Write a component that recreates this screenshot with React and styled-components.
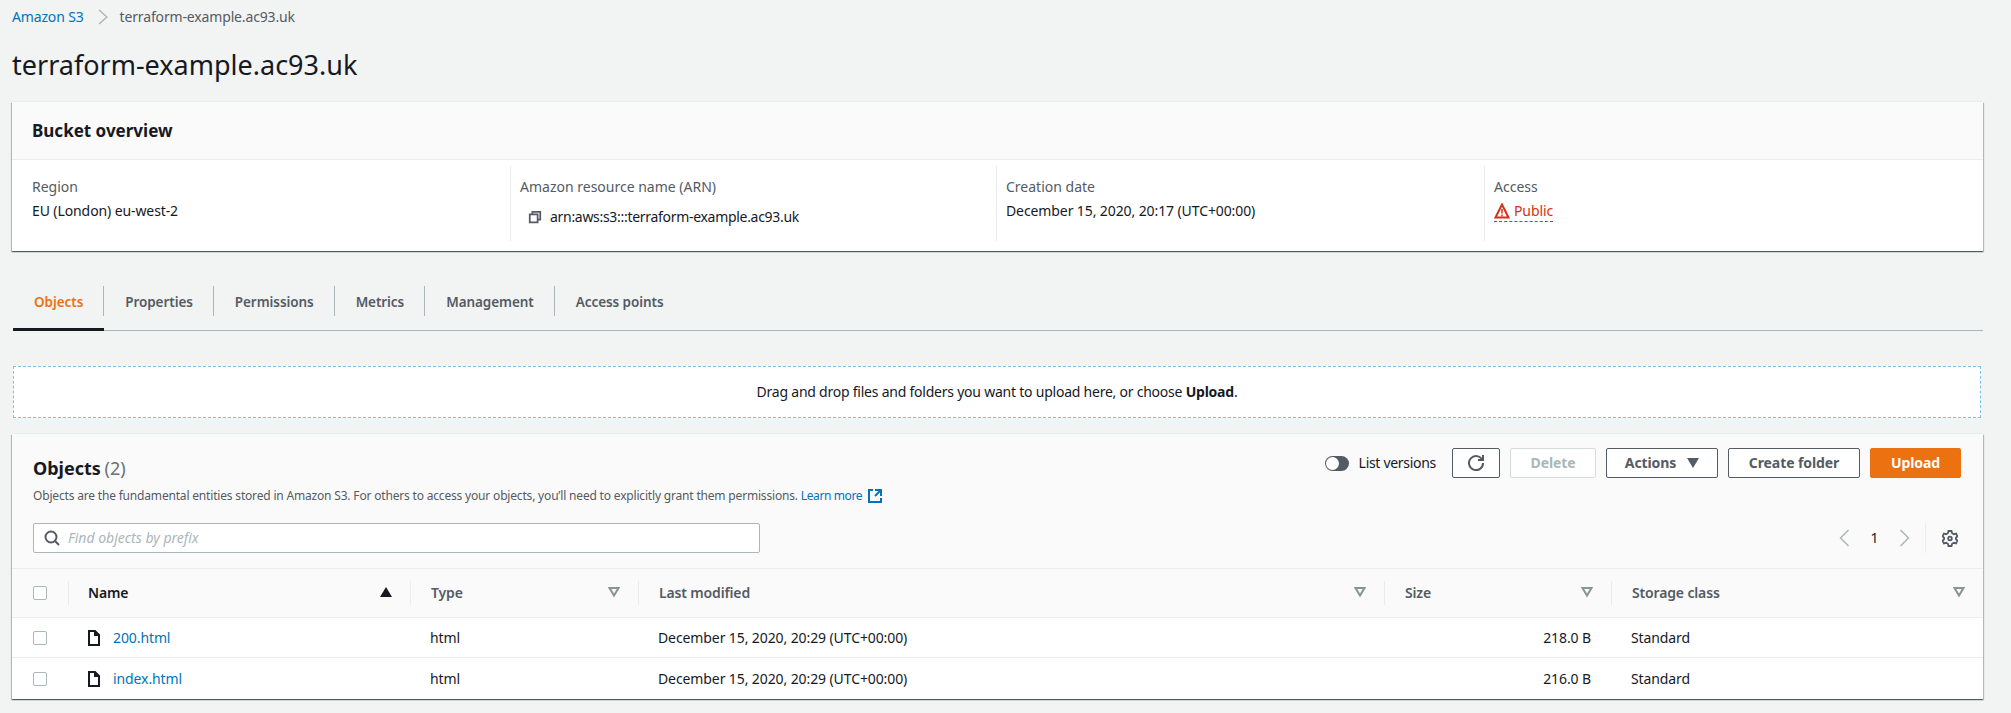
import React from 'react';
import styled, { createGlobalStyle } from 'styled-components';

const GlobalStyle = createGlobalStyle`
  html, body {
    margin: 0;
    padding: 0;
    background: #f2f3f3;
    color: #16191f;
    font-family: "Noto Sans", "Open Sans", sans-serif;
    font-size: 14px;
    line-height: 20px;
  }
`;

const Page = styled.div`
  width: 2011px;
  height: 713px;
  box-sizing: border-box;
  padding: 0 28px 0 12px;
  overflow: hidden;
`;

const Breadcrumbs = styled.nav`
  height: 34px;
  display: flex;
  align-items: center;
  font-size: 14px;
  letter-spacing: -0.15px;
  color: #545b64;
`;
const Link = styled.a`
  color: #0073bb;
`;
const CrumbSeparator = styled.svg`
  width: 10px;
  height: 16px;
  margin: 0 12px 0 14px;
  fill: none;
  stroke: #aab7b8;
  stroke-width: 1.5;
`;
const Title = styled.h1`
  margin: 0;
  height: 68px;
  box-sizing: border-box;
  padding-bottom: 6px;
  display: flex;
  align-items: center;
  font-size: 27px;
  font-weight: 400;
  line-height: 36px;
`;

const Panel = styled.section`
  margin-top: ${({ $gap }) => $gap || 0}px;
  background: #fff;
  box-shadow: 0 -1px 0 0 #eaeded, 0 1px 1px 0 rgba(0, 28, 36, 0.5), 1px 1px 1px 0 rgba(0, 28, 36, 0.2), -1px 1px 1px 0 rgba(0, 28, 36, 0.2);
`;
const PanelHeader = styled.header`
  height: 58px;
  box-sizing: border-box;
  display: flex;
  align-items: center;
  padding: 1px 20px 0;
  background: #fafafa;
  border-bottom: 1px solid #eaeded;
  font-size: 17px;
  font-weight: 700;
`;
const Overview = styled.div`
  height: 91px;
  box-sizing: border-box;
  padding: 6px 0 10px;
  display: grid;
  grid-template-columns: 498px 486px 488px 1fr;
`;
const OverviewCell = styled.div`
  padding: 11px 0 0 ${({ $first }) => ($first ? '20px' : '9px')};
  border-left: ${({ $first }) => ($first ? '0' : '1px solid #eaeded')};
`;
const Label = styled.div`
  color: #545b64;
  font-size: 14px;
  height: 20px;
`;
const Value = styled.div`
  display: flex;
  align-items: center;
  margin-top: 4px;
  font-size: 14px;
  letter-spacing: -0.1px;
`;
const ArnValue = styled(Value)`
  margin-top: 10px;
  padding-left: 8px;
  gap: 8px;
  letter-spacing: -0.3px;
`;
const PublicBadge = styled.span`
  display: inline-flex;
  align-items: center;
  gap: 4px;
  height: 20px;
  color: #d13212;
  border-bottom: 1px dashed #d13212;
`;

const TabList = styled.div`
  display: flex;
  margin: 35px 0 0 1px;
  height: 45px;
  box-sizing: border-box;
  border-bottom: 1px solid #aab7b8;
`;
const TabItem = styled.div`
  height: 45px;
  box-sizing: border-box;
  padding-left: 1px;
  border-bottom: 3px solid ${({ $active }) => ($active ? '#16191f' : 'transparent')};
`;
const TabLabel = styled.div`
  height: 30px;
  box-sizing: border-box;
  padding: 1px 20px 0;
  display: flex;
  align-items: center;
  font-size: 13.5px;
  font-weight: 600;
  letter-spacing: -0.07px;
  color: ${({ $active }) => ($active ? '#ec7211' : '#545b64')};
  border-right: ${({ $last }) => ($last ? '0' : '1px solid #aab7b8')};
`;

const DropZone = styled.div`
  margin: 35px 2px 0 1px;
  height: 52px;
  box-sizing: border-box;
  display: flex;
  align-items: center;
  justify-content: center;
  background: #fff;
  border: 1px dashed #7dc1e4;
  letter-spacing: -0.23px;
`;

const ObjectsHeader = styled.div`
  padding: 14px 22px 15px 21px;
  background: #fafafa;
  border-bottom: 1px solid #eaeded;
`;
const TopRow = styled.div`
  display: flex;
  justify-content: space-between;
  height: 61px;
  margin-bottom: 14px;
`;
const Heading = styled.div`
  padding-top: 8px;
`;
const HeadingTitle = styled.h2`
  margin: 0;
  font-size: 18px;
  line-height: 24px;
  font-weight: 700;
`;
const Count = styled.span`
  font-weight: 400;
  color: #687078;
  margin-left: -1px;
`;
const Description = styled.p`
  margin: 8px 0 0;
  display: flex;
  align-items: center;
  font-size: 12px;
  line-height: 16px;
  letter-spacing: -0.18px;
  color: #545b64;
`;
const LearnMore = styled(Link)`
  margin-left: 3px;
  letter-spacing: -0.4px;
`;
const Actions = styled.div`
  display: flex;
  align-items: flex-start;
  gap: 10px;
`;
const ToggleWrap = styled.div`
  display: flex;
  align-items: center;
  gap: 10px;
  height: 30px;
  margin-right: 6px;
  letter-spacing: -0.3px;
`;
const Toggle = styled.span`
  width: 24px;
  height: 15px;
  display: flex;
  align-items: center;
  padding: 0 10px 0 1px;
  box-sizing: border-box;
  border-radius: 8px;
  background: #545b64;
`;
const ToggleKnob = styled.span`
  width: 13px;
  height: 13px;
  flex: none;
  border-radius: 50%;
  background: #fff;
`;
const Button = styled.button`
  height: 30px;
  box-sizing: border-box;
  display: flex;
  align-items: center;
  justify-content: center;
  gap: 11px;
  padding: 0;
  width: ${({ $width }) => $width}px;
  font: 700 14px/20px "Noto Sans", sans-serif;
  letter-spacing: -0.1px;
  border-radius: 2px;
  border: 1px solid #545b64;
  background: #fff;
  color: #545b64;
`;
const DisabledButton = styled(Button)`
  border-color: #d5dbdb;
  color: #aab7b8;
`;
const PrimaryButton = styled(Button)`
  border-color: #ec7211;
  background: #ec7211;
  color: #fff;
`;
const SearchRow = styled.div`
  display: flex;
  justify-content: space-between;
  align-items: center;
  height: 30px;
`;
const SearchBox = styled.div`
  width: 727px;
  height: 30px;
  box-sizing: border-box;
  display: flex;
  align-items: center;
  gap: 8px;
  padding-left: 10px;
  background: #fff;
  border: 1px solid #aab7b8;
  border-radius: 2px;
`;
const Placeholder = styled.span`
  font-style: italic;
  font-size: 14px;
  color: #aab7b8;
`;
const Pager = styled.div`
  display: flex;
  align-items: center;
  height: 30px;
`;
const PageNumber = styled.span`
  width: 49px;
  text-align: center;
  font-size: 14px;
`;
const PagerDivider = styled.span`
  width: 1px;
  height: 30px;
  margin: 0 16px 0 15px;
  background: #eaeded;
`;

const columns = '56px 342px 228px 746px 227px 1fr';
const HeaderRow = styled.div`
  display: grid;
  grid-template-columns: ${columns};
  height: 49px;
  box-sizing: border-box;
  align-items: center;
  background: #fafafa;
  border-bottom: 1px solid #eaeded;
`;
const HeaderCell = styled.div`
  height: 24px;
  box-sizing: border-box;
  display: flex;
  align-items: center;
  justify-content: space-between;
  padding: 0 18px 0 ${({ $sorted }) => ($sorted ? '19px' : '20px')};
  border-left: 1px solid #eaeded;
  font-weight: 600;
  letter-spacing: -0.15px;
  color: ${({ $sorted }) => ($sorted ? '#16191f' : '#545b64')};
`;
const CheckCell = styled.div`
  padding-left: 21px;
  display: flex;
  align-items: center;
`;
const Checkbox = styled.span`
  width: 14px;
  height: 14px;
  box-sizing: border-box;
  display: block;
  background: #fff;
  border: 1px solid #aab7b8;
  border-radius: 2px;
`;
const Row = styled.div`
  display: grid;
  grid-template-columns: ${columns};
  height: ${({ $last }) => ($last ? '41px' : '40px')};
  box-sizing: border-box;
  align-items: center;
  border-bottom: ${({ $last }) => ($last ? '0' : '1px solid #eaeded')};
  letter-spacing: -0.1px;
`;
const Cell = styled.div`
  padding: 0 20px;
  display: flex;
  align-items: center;
  gap: 13px;
  justify-content: ${({ $right }) => ($right ? 'flex-end' : 'flex-start')};
`;

const Svg = styled.svg`
  flex: none;
  width: ${({ $w, $size }) => $w || $size || 16}px;
  height: ${({ $size }) => $size || 16}px;
  margin-top: ${({ $up }) => ($up ? -2 : 0)}px;
  margin-left: ${({ $ml }) => $ml || 0}px;
  margin-right: ${({ $mr }) => $mr || 0}px;
  fill: none;
  stroke: ${({ $color }) => $color || 'currentColor'};
  stroke-width: ${({ $stroke }) => $stroke || 2};
`;
const SolidSvg = styled(Svg)`
  stroke: none;
  fill: ${({ $color }) => $color || 'currentColor'};
`;

const CopyIcon = () => (
  <Svg viewBox="0 0 16 16" $size={14} $color="#545b64">
    <path d="M2 5h9v9H2z" />
    <path d="M5 5V2h9v9h-3" />
  </Svg>
);
const WarningIcon = () => (
  <Svg viewBox="0 0 16 16" $color="#d13212">
    <path d="M8 1.5 1.5 14.5h13z" />
    <path d="M8 6v4.5M8 11.5v2" strokeWidth="1.5" />
  </Svg>
);
const ExternalIcon = () => (
  <Svg viewBox="0 0 16 16" $color="#0073bb" $ml={5}>
    <path d="M6 2H2v12h12v-4" />
    <path d="M14 8V2H8" />
    <path d="M14 2 8 8" />
  </Svg>
);
const RefreshIcon = () => (
  <Svg viewBox="0 0 16 16">
    <path d="M10 5h5V0" />
    <path d="M15 8a7 7 0 1 1-.7-3" />
  </Svg>
);
const SearchIcon = () => (
  <Svg viewBox="0 0 16 16" $color="#545b64">
    <circle cx="7" cy="7" r="5.5" />
    <path d="m15 15-4.2-4.2" />
  </Svg>
);
const CaretDown = () => (
  <SolidSvg viewBox="0 0 12 10" $size={12}>
    <path d="M0 0h12L6 10z" />
  </SolidSvg>
);
const SortUp = () => (
  <SolidSvg viewBox="0 0 12 10" $size={12} $color="#16191f" $up>
    <path d="M6 0l6 10H0z" />
  </SolidSvg>
);
const FilterArrow = () => (
  <Svg viewBox="0 0 12 10" $size={12} $color="#879596" $up>
    <path d="M1.5 1h9L6 8.5z" />
  </Svg>
);
const FileIcon = () => (
  <Svg viewBox="0 0 12 16" $w={12} $color="#16191f">
    <path d="M1 1h6l4 4v10H1z" />
    <path d="M7 1v4h4" fill="#16191f" />
  </Svg>
);
const ChevronIcon = ({ flip }) => (
  <Svg viewBox="0 0 11 18" $w={11} $size={18} $stroke={1.5} $color="#aab7b8">
    <path d={flip ? 'M9.5 1 1.5 9l8 8' : 'M1.5 1l8 8-8 8'} />
  </Svg>
);
const GearIcon = () => (
  <Svg viewBox="0 0 16 17" $w={16} $size={17} $stroke={1.8} $color="#545b64" $mr={3}>
    <circle cx="8" cy="8.5" r="1.8" />
    <path d="M6.5 1h3l.6 2.2 1.8 1 2.2-.6 1.3 2.6-1.5 1.6v1.4l1.5 1.6-1.3 2.6-2.2-.6-1.8 1-.6 2.2h-3l-.6-2.2-1.8-1-2.2.6-1.3-2.6 1.5-1.6V7.8L.6 6.2l1.3-2.6 2.2.6 1.8-1z" />
  </Svg>
);

const tabs = ['Objects', 'Properties', 'Permissions', 'Metrics', 'Management', 'Access points'];
const objects = [
  { name: '200.html', size: '218.0 B' },
  { name: 'index.html', size: '216.0 B' },
];

export default function App() {
  return (
    <Page>
      <GlobalStyle />
      <Breadcrumbs>
        <Link>Amazon S3</Link>
        <CrumbSeparator viewBox="0 0 10 16">
          <path d="M1 1l8 7-8 7" />
        </CrumbSeparator>
        <span>terraform-example.ac93.uk</span>
      </Breadcrumbs>
      <Title>terraform-example.ac93.uk</Title>

      <Panel>
        <PanelHeader>Bucket overview</PanelHeader>
        <Overview>
          <OverviewCell $first>
            <Label>Region</Label>
            <Value>EU (London) eu-west-2</Value>
          </OverviewCell>
          <OverviewCell>
            <Label>Amazon resource name (ARN)</Label>
            <ArnValue>
              <CopyIcon />
              arn:aws:s3:::terraform-example.ac93.uk
            </ArnValue>
          </OverviewCell>
          <OverviewCell>
            <Label>Creation date</Label>
            <Value>December 15, 2020, 20:17 (UTC+00:00)</Value>
          </OverviewCell>
          <OverviewCell>
            <Label>Access</Label>
            <Value>
              <PublicBadge>
                <WarningIcon />
                Public
              </PublicBadge>
            </Value>
          </OverviewCell>
        </Overview>
      </Panel>

      <TabList>
        {tabs.map((tab, i) => (
          <TabItem key={tab} $active={i === 0}>
            <TabLabel $active={i === 0} $last={i === tabs.length - 1}>
              {tab}
            </TabLabel>
          </TabItem>
        ))}
      </TabList>

      <DropZone>
        <span>
          Drag and drop files and folders you want to upload here, or choose <b>Upload</b>.
        </span>
      </DropZone>

      <Panel $gap={16}>
        <ObjectsHeader>
          <TopRow>
            <Heading>
              <HeadingTitle>
                Objects <Count>(2)</Count>
              </HeadingTitle>
              <Description>
                Objects are the fundamental entities stored in Amazon S3. For others to access your objects, you’ll need to explicitly grant them permissions.
                <LearnMore>Learn more</LearnMore>
                <ExternalIcon />
              </Description>
            </Heading>
            <Actions>
              <ToggleWrap>
                <Toggle>
                  <ToggleKnob />
                </Toggle>
                List versions
              </ToggleWrap>
              <Button $width={48}>
                <RefreshIcon />
              </Button>
              <DisabledButton $width={86}>Delete</DisabledButton>
              <Button $width={112}>
                Actions
                <CaretDown />
              </Button>
              <Button $width={132}>Create folder</Button>
              <PrimaryButton $width={91}>Upload</PrimaryButton>
            </Actions>
          </TopRow>
          <SearchRow>
            <SearchBox>
              <SearchIcon />
              <Placeholder>Find objects by prefix</Placeholder>
            </SearchBox>
            <Pager>
              <ChevronIcon flip />
              <PageNumber>1</PageNumber>
              <ChevronIcon />
              <PagerDivider />
              <GearIcon />
            </Pager>
          </SearchRow>
        </ObjectsHeader>

        <HeaderRow>
          <CheckCell>
            <Checkbox />
          </CheckCell>
          <HeaderCell $sorted>
            Name
            <SortUp />
          </HeaderCell>
          <HeaderCell>
            Type
            <FilterArrow />
          </HeaderCell>
          <HeaderCell>
            Last modified
            <FilterArrow />
          </HeaderCell>
          <HeaderCell>
            Size
            <FilterArrow />
          </HeaderCell>
          <HeaderCell>
            Storage class
            <FilterArrow />
          </HeaderCell>
        </HeaderRow>

        {objects.map((object, i) => (
          <Row key={object.name} $last={i === objects.length - 1}>
            <CheckCell>
              <Checkbox />
            </CheckCell>
            <Cell>
              <FileIcon />
              <Link>{object.name}</Link>
            </Cell>
            <Cell>html</Cell>
            <Cell>December 15, 2020, 20:29 (UTC+00:00)</Cell>
            <Cell $right>{object.size}</Cell>
            <Cell>Standard</Cell>
          </Row>
        ))}
      </Panel>
    </Page>
  );
}
